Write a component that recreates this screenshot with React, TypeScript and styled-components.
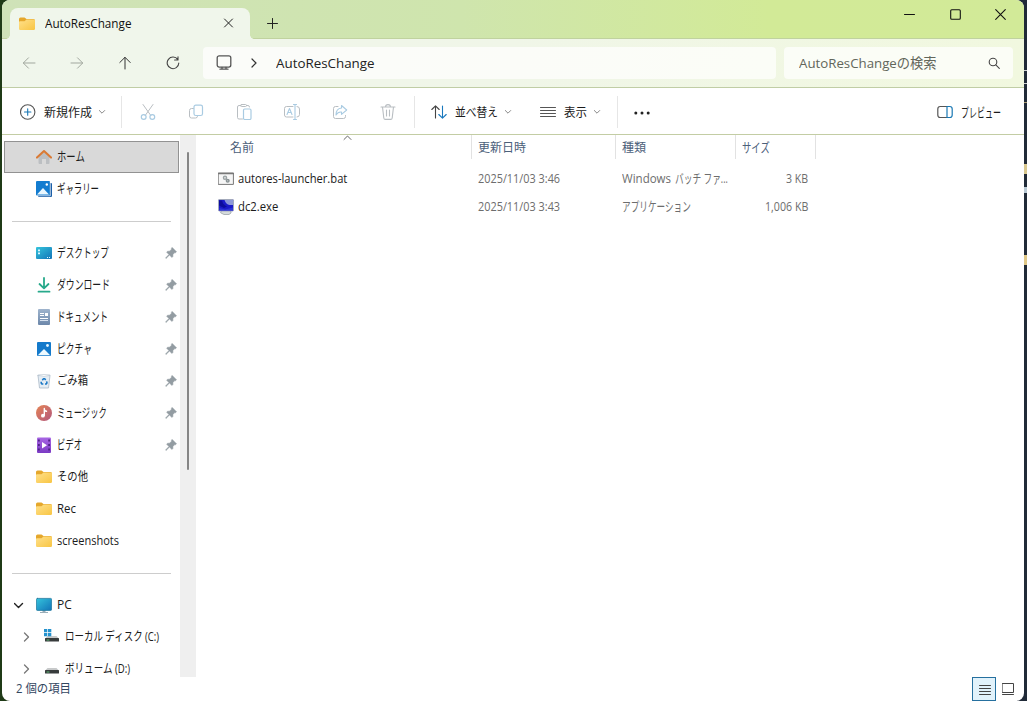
import React, { useLayoutEffect, useRef, useState } from "react";
import styled, { createGlobalStyle } from "styled-components";

const Global = createGlobalStyle`
  * { box-sizing: border-box; }
  html, body { margin: 0; padding: 0; }
  body {
    font-family: "Open Sans", "Noto Sans CJK JP", sans-serif;
    font-size: 12px;
    line-height: 16px;
    color: #1b1b1b;
    overflow: hidden;
  }
  svg { display: block; flex: none; }
`;

const Desktop = styled.div`
  position: relative;
  width: 1027px;
  height: 701px;
  padding: 0 3px 0 2px;
  background: linear-gradient(90deg, #1f3a17 0 50%, #202a38 50% 100%);
  overflow: hidden;
`;
const Glimpse = styled.i<{ $top: number; $h: number; $c: string }>`
  position: absolute;
  right: 0;
  width: 3px;
  top: ${(p) => p.$top}px;
  height: ${(p) => p.$h}px;
  background: ${(p) => p.$c};
`;
const Window = styled.div`
  position: relative;
  display: flex;
  flex-direction: column;
  width: 1022px;
  height: 701px;
  border-radius: 8px;
  background: #fff;
  overflow: hidden;
`;

const FitBox = styled.span<{ $w: number; $dy?: number; $size?: number }>`
  display: block;
  flex: none;
  width: ${(p) => p.$w}px;
  white-space: nowrap;
  margin-top: ${(p) => (p.$dy || 0) * 2}px;
  ${(p) => (p.$size ? `font-size: ${p.$size}px;` : "")}
  ${(p) => (p.$size === 13 ? "transform: translateY(-1px);" : "")}
`;
const FitInner = styled.span`
  display: inline-block;
  transform-origin: 0 50%;
  vertical-align: top;
`;
function Fit({ w, dy, size, children }: { w: number; dy?: number; size?: number; children: React.ReactNode }) {
  const ref = useRef<HTMLSpanElement>(null);
  const [scale, setScale] = useState(1);
  useLayoutEffect(() => {
    if (ref.current) setScale(w / ref.current.offsetWidth);
  }, [w]);
  return (
    <FitBox $w={w} $dy={dy} $size={size}>
      <FitInner ref={ref} style={{ transform: `scaleX(${scale})` }}>{children}</FitInner>
    </FitBox>
  );
}

/* Title bar */
const TitleBar = styled.header`
  display: flex;
  align-items: flex-end;
  height: 39px;
  padding-left: 8px;
  background: linear-gradient(90deg, #cfe2b8 0%, #cfe5ad 45%, #d2ea97 75%, #d2ea98 100%);
  box-shadow: inset 0 -1px #c0d29f;
`;
const Tab = styled.div`
  position: relative;
  display: flex;
  align-items: center;
  width: 240px;
  height: 31px;
  padding: 0 16px 0 9px;
  background: #f0f6eb;
  border-radius: 8px 8px 0 0;
  color: #111;
  font-weight: 500;
  &::before, &::after {
    content: "";
    position: absolute;
    bottom: 0;
    width: 4px;
    height: 4px;
  }
  &::before { left: -4px; background: radial-gradient(circle at 0 0, transparent 3.5px, #f0f6eb 4px); }
  &::after { right: -4px; background: radial-gradient(circle at 100% 0, transparent 3.5px, #f0f6eb 4px); }
`;
const TabTitle = styled.div`
  flex: 1;
  margin-left: 10px;
`;
const NewTab = styled.div`
  display: flex;
  padding: 0 0 10px 17px;
`;
const Caption = styled.div`
  display: flex;
  align-self: flex-start;
  margin-left: auto;
  padding-right: 0.5px;
  height: 29px;
`;
const CaptionButton = styled.div`
  display: flex;
  align-items: center;
  justify-content: center;
  width: 45.5px;
`;

/* Navigation bar */
const NavBar = styled.nav`
  display: flex;
  align-items: center;
  height: 49px;
  border-bottom: 1px solid #c0cda5;
  background: linear-gradient(90deg, #f0f6ec 0%, #f0f6e8 50%, #f1f8df 100%);
`;
const NavButtons = styled.div`
  display: flex;
  width: 201px;
  padding-left: 3px;
`;
const NavButton = styled.div`
  display: flex;
  justify-content: center;
  width: 48px;
`;
const Field = styled.div<{ $w: number }>`
  display: flex;
  align-items: center;
  width: ${(p) => p.$w}px;
  height: 32px;
  border-radius: 4px;
  background: rgba(255, 255, 255, 0.7);
  font-size: 13.5px;
`;
const Address = styled(Field)`
  margin-right: 8px;
  padding-left: 13px;
  color: #222;
  svg + svg { margin: 0 19px 0 19px; }
`;
const Search = styled(Field)`
  justify-content: space-between;
  padding: 0 12px 0 15px;
  color: #62665b;
`;

/* Command bar */
const CommandBar = styled.div`
  display: flex;
  align-items: center;
  height: 47px;
  padding-top: 2px;
  border-bottom: 1px solid #c3cda4;
`;
const Command = styled.div<{ $l?: number; $r?: number; $gap?: number }>`
  display: flex;
  align-items: center;
  gap: ${(p) => p.$gap ?? 8}px;
  padding-left: ${(p) => p.$l || 0}px;
  padding-right: ${(p) => p.$r || 0}px;
`;
const Caret = styled.span`
  display: flex;
  margin-left: -2px;
`;
const IconCommands = styled.div`
  display: flex;
  padding: 0 2px;
`;
const IconCommand = styled.div`
  display: flex;
  align-items: center;
  justify-content: center;
  width: 48px;
`;
const Rule = styled.i`
  width: 1px;
  height: 32px;
  background: #e6e6e6;
`;
const PreviewCommand = styled(Command)`
  margin-left: auto;
  padding-right: 23px;
`;

/* Body */
const Body = styled.main`
  display: flex;
  height: 542px;
  overflow: hidden;
`;
const Sidebar = styled.aside`
  width: 178px;
  padding-top: 6px;
  padding-left: 2px;
  overflow: hidden;
`;
const SideItem = styled.div<{ $active?: boolean; $depth?: number }>`
  display: flex;
  align-items: center;
  position: relative;
  width: 175px;
  height: 32px;
  padding-left: ${(p) => (p.$depth ? 15 : 7)}px;
  background: ${(p) => (p.$active ? "#d9d9d9" : "transparent")};
  box-shadow: ${(p) => (p.$active ? "inset 0 0 0 1px #929292" : "none")};
`;
const Twisty = styled.span<{ $depth?: number }>`
  display: flex;
  justify-content: center;
  width: 15px;
  margin-right: 9px;
`;
const SideIcon = styled.span`
  display: flex;
  width: 18px;
  justify-content: center;
  margin-right: 4px;
`;
const Pin = styled.span`
  margin-left: auto;
  padding-right: 2px;
`;
const SideDivider = styled.div`
  width: 159px;
  height: 32px;
  margin-left: 8px;
  padding-top: 16px;
  &::before {
    content: "";
    display: block;
    height: 1px;
    background: #cdcdcd;
  }
`;
const ScrollTrack = styled.div`
  width: 16px;
  padding: 17px 0 0 7px;
  background: #efefef;
`;
const ScrollThumb = styled.div`
  width: 2px;
  height: 318px;
  border-radius: 1px;
  background: #858585;
`;

/* File list */
const Files = styled.section`
  display: flex;
  flex-direction: column;
  width: 620px;
`;
const HeaderRow = styled.div`
  position: relative;
  display: grid;
  grid-template-columns: 276px 144px 120px 80px;
  height: 24px;
  margin-bottom: 6px;
  color: #4c607a;
`;
const HeaderCell = styled.div<{ $first?: boolean }>`
  display: flex;
  align-items: center;
  padding: 1px 0 0 ${(p) => (p.$first ? 34 : 6)}px;
  border-right: 1px solid #e2e2e2;
`;
const SortMark = styled.span`
  position: absolute;
  left: 147px;
  top: 0;
`;
const FileRow = styled.div`
  display: grid;
  grid-template-columns: 276px 144px 120px 72px;
  align-items: center;
  height: 28px;
`;
const Name = styled.div`
  display: flex;
  align-items: center;
  gap: 4px;
  padding-left: 22px;
`;
const Meta = styled.div<{ $end?: boolean }>`
  display: flex;
  gap: 4px;
  padding-left: 6px;
  justify-content: ${(p) => (p.$end ? "flex-end" : "flex-start")};
  color: #6d6d6d;
`;

const StatusBar = styled.footer`
  display: flex;
  align-items: center;
  justify-content: space-between;
  height: 24px;
  padding: 0 4px 0 14px;
  color: #32465f;
`;
const ViewSwitch = styled.div`
  display: flex;
`;
const ViewButton = styled.div<{ $on?: boolean }>`
  display: flex;
  align-items: center;
  justify-content: center;
  width: 24px;
  height: 24px;
  padding-left: ${(p) => (p.$on ? 2 : 0)}px;
  border: 1px solid ${(p) => (p.$on ? "#26709f" : "transparent")};
  background: ${(p) => (p.$on ? "#e1f2fb" : "transparent")};
`;

/* Icons */
const Svg = ({ w = 16, h = 16, s = "#333", sw = 1, children }: { w?: number; h?: number; s?: string; sw?: number; children: React.ReactNode }) => (
  <svg width={w} height={h} viewBox={`0 0 ${w} ${h}`} fill="none" stroke={s} strokeWidth={sw} strokeLinecap="round" strokeLinejoin="round">
    {children}
  </svg>
);

const Folder = () => (
  <Svg s="none">
    <path d="M0 3Q0 1.500 1.500 1.500H5.500L7.500 3H14.500Q16 3 16 4.500V8H0Z" fill="#e5a72c" />
    <path d="M0 6Q0 5.200 1 5.200H5.500L7.500 3.600H15Q16 3.600 16 4.600V12.700Q16 14 14.700 14H1.300Q0 14 0 12.700Z" fill="url(#fold)" />
  </Svg>
);
const Down = ({ c = "#888" }) => <Svg w={8} h={6} s={c}><path d="M1.300 1.500 4 4.200 6.700 1.500" /></Svg>;
const PinIcon = () => (
  <Svg w={12} h={12} s="none">
    <path d="M7.300.6 11.500 4.800 10.600 5.700 9.900 5.500 7.900 7.600V9.500L6.900 10.500 4.500 8.100 1 11.500.5 11 3.900 7.500 1.600 5.200 2.600 4.200H4.500L6.500 2.200 6.400 1.500Z" fill="#939ca2" stroke="#939ca2" strokeWidth=".5" />
  </Svg>
);
const HomeIcon = () => (
  <Svg s="none">
    <path d="M2.500 8 8 3.300 13.500 8V14Q13.500 15 12.500 15H10V10H6V15H3.500Q2.500 15 2.500 14Z" fill="#bcbfc2" />
    <path d="M1 8.600 8 2 15 8.600" stroke="#d97a35" strokeWidth="2.100" strokeLinecap="round" />
  </Svg>
);
const GalleryIcon = () => (
  <Svg s="none">
    <path d="M14 2h1q1 0 1 1v12q0 1-1 1H3q-1 0-1-1v-1h12Z" fill="#1b5fa8" />
    <rect width="14" height="14.500" rx="1" fill="#137cd0" />
    <path d="M14.300 1.500V14.800H2" stroke="#fff" strokeWidth=".7" />
    <path d="M1 13.500 7 7l6 6.500Z" fill="#e9f7ff" />
    <circle cx="10.800" cy="3.500" r="1.200" fill="#fff" />
  </Svg>
);
const DesktopIcon = () => (
  <Svg s="none">
    <rect y="2" width="16" height="12" rx="1" fill="url(#desk)" />
    <path d="M2 4.500h2v1.700H2zM2 7.500h2v1.700H2z" fill="#d9f7ff" />
    <path d="M11 12h1v1h-1zm2 0h1v1h-1z" fill="#d9f7ff" />
  </Svg>
);
const DownloadIcon = () => <Svg s="#27a98b" sw={1.8}><path d="M8 1v10M3.500 7 8 11.300 12.500 7M2.500 14.700h11" /></Svg>;
const DocumentIcon = () => (
  <Svg s="none">
    <rect x="2" y="0" width="12" height="16" rx="1" fill="url(#doc)" />
    <path d="M4 4.500h4M4 6.500h4M4 9.500h8" stroke="#fff" strokeLinecap="butt" />
    <path d="M9 4h3v3H9z" fill="#fff" />
    <path d="M4 11.500h8" stroke="#d5e0ee" strokeLinecap="butt" />
  </Svg>
);
const PictureIcon = () => (
  <Svg s="none">
    <rect x="1" y="1" width="14" height="14" rx="1" fill="#147acb" />
    <path d="M1.800 14.300 8 8l6.200 6.300Z" fill="#eefaff" />
    <circle cx="11.500" cy="4.500" r="1.400" fill="#e7f7ff" />
  </Svg>
);
const BinIcon = () => (
  <Svg s="none">
    <path d="M2 2.500 3.500 15h9L14 2.500Z" fill="#e5edf4" stroke="#a9b9c8" strokeWidth=".8" />
    <path d="M2 2.500Q8 .5 14 2.500 8 4.500 2 2.500Z" fill="#fff" stroke="#b8c5d0" strokeWidth=".6" />
    <path d="M6.300 7.200 7.500 5.700H8.700L9.700 7M10.600 8.300 11 10 10.200 10.900H9M7.300 10.900H5.700L5.100 9.800 5.500 8.700" stroke="#1a78c6" strokeWidth="1.500" strokeLinecap="butt" />
  </Svg>
);
const MusicIcon = () => (
  <Svg s="none">
    <circle cx="8" cy="8" r="8" fill="url(#music)" />
    <path d="M8.300 3.500V10.500M8.300 4Q8.300 6 10.500 6.300" stroke="#fff" strokeWidth="1.400" />
    <circle cx="6.900" cy="10.700" r="1.900" fill="#fff" />
  </Svg>
);
const VideoIcon = () => (
  <Svg s="none">
    <rect x="1" y="0.500" width="14" height="15.500" rx="1" fill="url(#video)" />
    <path d="M2.900 2.500v12M13.100 2.500v12" stroke="#4d2383" strokeWidth="1.700" strokeDasharray="2 2.500" strokeLinecap="butt" />
    <path d="M6 5v6.500L11 8.200Z" fill="#fff" />
  </Svg>
);
const PcIcon = () => (
  <Svg s="none">
    <path d="M6.500 13h3v2h-3zM4 15h8v.9H4z" fill="#9aaeb9" />
    <rect x=".4" y="1.400" width="15.200" height="12" rx="1" fill="url(#desk)" stroke="#237ba0" strokeWidth=".8" />
  </Svg>
);
const DriveIcon = ({ win }: { win?: boolean }) => (
  <Svg s="none">
    <path d="M3.500 7h9L15 9.800H1Z" fill="#c7c9ca" />
    <rect x="1" y="9" width="14" height="3.500" rx=".5" fill="#373b3c" />
    <path d="M3 11h2" stroke="#5dbb76" />
    {win && <path d="M0 0h3.300v3.200H0zM4 0h3.300v3.200H4zM0 4h3.300v3.200H0zM4 4h3.300v3.200H4z" fill="#2492ce" />}
  </Svg>
);
const BatIcon = () => (
  <Svg s="none">
    <rect x=".6" y="2.100" width="14.800" height="11.300" fill="#f6f6f6" stroke="#777" />
    <path d="M.5 2.500h15" stroke="#777" strokeWidth="1.500" />
    <circle cx="7" cy="6.700" r="1.600" fill="#d7dcdd" stroke="#9aa1a3" strokeWidth="1.300" />
    <circle cx="9.700" cy="9.700" r="1.300" fill="#d7dcdd" stroke="#899294" strokeWidth="1.500" />
  </Svg>
);
const ExeIcon = () => (
  <Svg s="none">
    <path d="M3 12.500 5 11h6l2 1.500V14l-2 1.500H6L3 14Z" fill="#d5dadb" stroke="#9aa3a8" strokeWidth=".8" />
    <rect x=".5" y=".5" width="15" height="11.500" rx=".8" fill="#1a1ac8" stroke="#a3aabb" />
    <path d="M6.500 1H15V6H11.500Q8 5.500 6.500 1Z" fill="#8d98d8" />
    <path d="M1 1.500H4Q5 6 9 7.500L6 9 1 6.500Z" fill="#0c0c9c" />
    <path d="M1.500 9 7 10.500 15 8.500V11.500H1.500Z" fill="#2d35d6" />
  </Svg>
);

type Side = { t: string; w: number; size?: number; icon: React.ReactNode; pin?: boolean; active?: boolean; depth?: number; tw?: React.ReactNode };
const chevR = <Svg w={7} h={12} s="#777" sw={1.3}><path d="M1.500 2 5.500 6 1.500 10" /></Svg>;
const home: Side[] = [
  { t: "ホーム", w: 28, size: 13, icon: <HomeIcon />, active: true },
  { t: "ギャラリー", w: 42, size: 13, icon: <GalleryIcon /> },
];
const quick: Side[] = [
  { t: "デスクトップ", w: 52, size: 13, icon: <DesktopIcon />, pin: true },
  { t: "ダウンロード", w: 53, size: 13, icon: <DownloadIcon />, pin: true },
  { t: "ドキュメント", w: 51, size: 13, icon: <DocumentIcon />, pin: true },
  { t: "ピクチャ", w: 35, size: 13, icon: <PictureIcon />, pin: true },
  { t: "ごみ箱", w: 31, icon: <BinIcon />, pin: true },
  { t: "ミュージック", w: 50, size: 13, icon: <MusicIcon />, pin: true },
  { t: "ビデオ", w: 25, size: 13, icon: <VideoIcon />, pin: true },
  { t: "その他", w: 31, icon: <Folder /> },
  { t: "Rec", w: 19, icon: <Folder /> },
  { t: "screenshots", w: 62.5, icon: <Folder /> },
];
const pc: Side[] = [
  { t: "PC", w: 15, icon: <PcIcon />, tw: <Svg w={10} h={7} s="#222" sw={1.4}><path d="M.5 1.500 4.500 5.500 8.500 1.500" /></Svg> },
  { t: "ローカル ディスク (C:)", w: 94, size: 12.5, icon: <DriveIcon win />, depth: 1, tw: chevR },
  { t: "ボリューム (D:)", w: 65, size: 12.5, icon: <DriveIcon />, depth: 1, tw: chevR },
];
const renderSide = (items: Side[]) =>
  items.map((i) => (
    <SideItem key={i.t} $active={i.active} $depth={i.depth}>
      <Twisty>{i.tw}</Twisty>
      <SideIcon>{i.icon}</SideIcon>
      <Fit w={i.w} size={i.size}>{i.t}</Fit>
      {i.pin && <Pin><PinIcon /></Pin>}
    </SideItem>
  ));

const blue = "#a9cbe2";
const grey = "#b9bec2";

export default function App() {
  return (
    <Desktop>
      <Global />
      <svg width="0" height="0" style={{ position: "absolute" }}>
        <defs>
          <linearGradient id="fold" x1="0" y1="0" x2="1" y2="1"><stop stopColor="#ffe08a" /><stop offset="1" stopColor="#f8c544" /></linearGradient>
          <linearGradient id="desk" x1="0" y1="0" x2="1" y2="1"><stop stopColor="#35c4dc" /><stop offset="1" stopColor="#1274b8" /></linearGradient>
          <linearGradient id="doc" x1="0" y1="0" x2="0" y2="1"><stop stopColor="#9fb4cd" /><stop offset="1" stopColor="#6c87aa" /></linearGradient>
          <linearGradient id="music" x1="0" y1="0" x2="1" y2="1"><stop stopColor="#e58454" /><stop offset="1" stopColor="#b2587f" /></linearGradient>
          <linearGradient id="video" x1="0" y1="0" x2="0" y2="1"><stop stopColor="#a866e4" /><stop offset="1" stopColor="#7b3bc4" /></linearGradient>
        </defs>
      </svg>
      <Glimpse $top={70} $h={1} $c="#cfd2d3" />
      <Glimpse $top={83} $h={1} $c="#cfd2d3" />
      <Glimpse $top={102} $h={1} $c="#a99a72" />
      <Glimpse $top={164} $h={10} $c="#d9c88f" />
      <Glimpse $top={187} $h={6} $c="#b9c9d4" />
      <Glimpse $top={255} $h={10} $c="#e0c887" />
      <Window>
        <TitleBar>
          <Tab>
            <Folder />
            <TabTitle><Fit w={87}>AutoResChange</Fit></TabTitle>
            <Svg w={11} h={11} s="#222"><path d="M1.500 1 9.500 9M9.500 1 1.500 9" /></Svg>
          </Tab>
          <NewTab><Svg w={11} h={11} s="#222"><path d="M.5 5.500h10M5.500.5v10" /></Svg></NewTab>
          <Caption>
            <CaptionButton><Svg w={11} h={11} s="#111"><path d="M.5 5.500h10" /></Svg></CaptionButton>
            <CaptionButton><Svg w={11} h={11} s="#111" sw={1.1}><rect x=".7" y=".7" width="9.600" height="9.600" rx="1" /></Svg></CaptionButton>
            <CaptionButton><Svg w={11} h={11} s="#111" sw={1.1}><path d="M.7.7 10.300 10.300M10.300.7.7 10.300" /></Svg></CaptionButton>
          </Caption>
        </TitleBar>
        <NavBar>
          <NavButtons>
            <NavButton><Svg w={14} h={14} s="#a1a79e"><path d="M13 7H1.500M6.500 1.800 1.300 7l5.200 5.200" /></Svg></NavButton>
            <NavButton><Svg w={14} h={14} s="#a1a79e"><path d="M1 7h11.500M7.500 1.800 12.700 7l-5.200 5.200" /></Svg></NavButton>
            <NavButton><Svg w={14} h={14} s="#333"><path d="M7 13V1.500M1.800 6.500 7 1.300l5.200 5.200" /></Svg></NavButton>
            <NavButton><Svg w={14} h={14} s="#444" sw={1.1}><path d="M11.800 3.600A5.800 5.800 0 1 0 12.800 7M12 .8V4H8.600" /></Svg></NavButton>
          </NavButtons>
          <Address $w={573}>
            <Svg s="#555" sw={1.3}><rect x="1.200" y=".8" width="13.600" height="11.300" rx="2" /><path d="M6 12.500v1.500M10 12.500v1.500M4 14.200h8" /></Svg>
            <Svg w={6} h={10} s="#333" sw={1.2}><path d="M1 1 5 5 1 9" /></Svg>
            <Fit w={99}>AutoResChange</Fit>
          </Address>
          <Search $w={229}>
            <Fit w={137.5}>AutoResChangeの検索</Fit>
            <Svg w={14} h={14} s="#444" sw={1.1}><circle cx="6" cy="6" r="3.800" /><path d="M8.800 8.800 12.300 12.300" /></Svg>
          </Search>
        </NavBar>
        <CommandBar>
          <Command $l={18} $r={15} $gap={8}>
            <Svg s="#555" sw={1.1}><circle cx="7.700" cy="8" r="7.200" /><path d="M7.700 4.800v6.400M4.500 8h6.400" stroke="#1877b4" /></Svg>
            <Fit w={48} dy={1}>新規作成</Fit>
            <Caret><Down /></Caret>
          </Command>
          <Rule />
          <IconCommands>
            <IconCommand><Svg h={18} s={grey}><path d="M3 1.500 10.800 12.500M13 1.500 5.200 12.500" /><g stroke={blue} strokeWidth="1.200"><circle cx="3.700" cy="14" r="2.400" /><circle cx="12.300" cy="14" r="2.400" /></g></Svg></IconCommand>
            <IconCommand><Svg s={grey}><path d="M5.500 4.500H3.500Q1.500 4.500 1.500 6.500V12Q1.500 14 3.500 14H7.500Q9.500 14 9.500 12.500" /><rect x="6" y="1.200" width="8.500" height="10.300" rx="1.800" stroke={blue} strokeWidth="1.200" /></Svg></IconCommand>
            <IconCommand><Svg s={grey}><path d="M5 1.500H3Q1.500 1.500 1.500 3V13.500Q1.500 15 3 15H6.500M10.500 1.500H12Q13.500 1.500 13.500 3" /><rect x="4.500" y=".5" width="6" height="2" rx="1" /><rect x="7.500" y="5" width="7.500" height="10.500" rx="1.200" stroke={blue} strokeWidth="1.200" /></Svg></IconCommand>
            <IconCommand><Svg w={18} s={grey}><path d="M10 2.500H3.500Q1.500 2.500 1.500 4.500V11Q1.500 13 3.500 13H10M14 2.500Q16.500 2.500 16.500 5V10.500Q16.500 13 14 13" /><path d="M10.500.5h3M12 .5v15M10.500 15.500h3M4 10.500 6.500 4.500 9 10.500M5 8.500h3" stroke={blue} strokeWidth="1.100" /></Svg></IconCommand>
            <IconCommand><Svg s={grey}><path d="M6 2.500H3.500Q1.500 2.500 1.500 4.500V12.500Q1.500 14.500 3.500 14.500H11.500Q13.500 14.500 13.500 12.500V11.500" /><path d="M9.500 1.500 14.700 6 9.500 10.300V8Q6 7.500 4 11 4 4.500 9.500 4Z" stroke={blue} strokeWidth="1.100" /></Svg></IconCommand>
            <IconCommand><Svg s={grey} sw={1.1}><path d="M1 3h14M5.500 3Q5.500.6 8 .6T10.500 3M2.500 3 3.800 14Q4 15.400 5.300 15.400H10.700Q12 15.400 12.200 14L13.500 3M6.500 6v6M9.500 6v6" /></Svg></IconCommand>
          </IconCommands>
          <Rule />
          <Command $l={16} $r={28} $gap={8}>
            <Svg s="#444" sw={1.1}><path d="M4.500 14V2M.8 5.500 4.500 1.800 8.200 5.500" /><path d="M11.500 2v12M7.800 10.500 11.500 14.200 15.200 10.500" stroke="#1978bd" /></Svg>
            <Fit w={43} dy={1}>並べ替え</Fit>
            <Caret><Down /></Caret>
          </Command>
          <Command $r={16} $gap={8}>
            <Svg s="#555"><path d="M.5 3.500h15M.5 6.500h15M.5 9.500h15M.5 12.500h15" /></Svg>
            <Fit w={23} dy={1}>表示</Fit>
            <Caret><Down /></Caret>
          </Command>
          <Rule />
          <Command $l={16}>
            <Svg s="none"><g fill="#222"><circle cx="1.800" cy="9" r="1.500" /><circle cx="8" cy="9" r="1.500" /><circle cx="14.200" cy="9" r="1.500" /></g></Svg>
          </Command>
          <PreviewCommand>
            <Svg s="#555" sw={1.2}><path d="M10 2.500H3.200Q.8 2.500 .8 5V11Q.8 13.500 3.200 13.500H10" /><path d="M10 2.500H12.800Q15.200 2.500 15.200 5V11Q15.200 13.500 12.800 13.500H10Z" stroke="#1978b4" /></Svg>
            <Fit w={40} dy={1} size={13}>プレビュー</Fit>
          </PreviewCommand>
        </CommandBar>
        <Body>
          <Sidebar>
            {renderSide(home)}
            <SideDivider />
            {renderSide(quick)}
            <SideDivider />
            {renderSide(pc)}
          </Sidebar>
          <ScrollTrack><ScrollThumb /></ScrollTrack>
          <Files>
            <HeaderRow>
              <HeaderCell $first><Fit w={24}>名前</Fit></HeaderCell>
              <HeaderCell><Fit w={48}>更新日時</Fit></HeaderCell>
              <HeaderCell><Fit w={24}>種類</Fit></HeaderCell>
              <HeaderCell><Fit w={28} size={13}>サイズ</Fit></HeaderCell>
              <SortMark><Svg w={9} h={6} s="#666"><path d="M1 4.500 4.500 1 8 4.500" /></Svg></SortMark>
            </HeaderRow>
            <FileRow>
              <Name><BatIcon /><Fit w={109}>autores-launcher.bat</Fit></Name>
              <Meta><Fit w={82.5}>2025/11/03 3:46</Fit></Meta>
              <Meta><Fit w={49}>Windows</Fit><Fit w={53} size={13}>バッチ ファ...</Fit></Meta>
              <Meta $end><Fit w={22}>3 KB</Fit></Meta>
            </FileRow>
            <FileRow>
              <Name><ExeIcon /><Fit w={40.5}>dc2.exe</Fit></Name>
              <Meta><Fit w={82.5}>2025/11/03 3:43</Fit></Meta>
              <Meta><Fit w={69} size={13}>アプリケーション</Fit></Meta>
              <Meta $end><Fit w={43.5}>1,006 KB</Fit></Meta>
            </FileRow>
          </Files>
        </Body>
        <StatusBar>
          <Fit w={55}>2 個の項目</Fit>
          <ViewSwitch>
            <ViewButton $on><Svg w={12} h={12} s="#444"><path d="M.5 2.500h11M.5 5.500h11M.5 8.500h11M.5 11.500h11" /></Svg></ViewButton>
            <ViewButton><Svg w={12} h={12} s="#444"><path d="M.5.500h11v9H.5ZM.5 11.500h11" /></Svg></ViewButton>
          </ViewSwitch>
        </StatusBar>
      </Window>
    </Desktop>
  );
}
